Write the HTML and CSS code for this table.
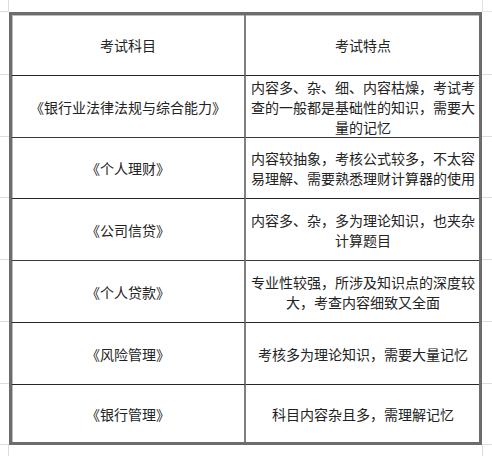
FILE: index.html
```html
<!DOCTYPE html>
<html lang="zh-CN">
<head>
<meta charset="utf-8">
<title>考试科目</title>
<link rel="stylesheet" href="styles.css">
</head>
<body>
<div class="sheet">
  <div class="corner tl"></div>
  <div class="gut-top"></div>
  <div class="corner tr"></div>

  <div class="gut side">
    <div class="seg s1"></div><div class="seg s2"></div><div class="seg s3"></div><div class="seg s4"></div><div class="seg s5"></div><div class="seg s6"></div><div class="seg s7"></div>
  </div>

  <div class="tbl">
    <div class="cell left r0">考试科目</div>
    <div class="cell right r0">考试特点</div>

    <div class="cell left r1 line">《银行业法律法规与综合能力》</div>
    <div class="cell right r1 line">内容多、杂、细、内容枯燥，考试考<br>查的一般都是基础性的知识，需要大<br>量的记忆</div>

    <div class="cell left r2 line">《个人理财》</div>
    <div class="cell right r2 line">内容较抽象，考核公式较多，不太容<br>易理解、需要熟悉理财计算器的使用</div>

    <div class="cell left r3 line">《公司信贷》</div>
    <div class="cell right r3 line">内容多、杂，多为理论知识，也夹杂<br>计算题目</div>

    <div class="cell left r4 line">《个人贷款》</div>
    <div class="cell right r4 line">专业性较强，所涉及知识点的深度较<br>大，考查内容细致又全面</div>

    <div class="cell left r5 line">《风险管理》</div>
    <div class="cell right r5 line">考核多为理论知识，需要大量记忆</div>

    <div class="cell left r6 line">《银行管理》</div>
    <div class="cell right r6 line">科目内容杂且多，需理解记忆</div>
  </div>

  <div class="gut side right-gut">
    <div class="seg s1"></div><div class="seg s2"></div><div class="seg s3"></div><div class="seg s4"></div><div class="seg s5"></div><div class="seg s6"></div><div class="seg s7"></div>
  </div>

  <div class="corner bl"></div>
  <div class="gut-bottom"></div>
  <div class="corner br"></div>
</div>
</body>
</html>
```

FILE: styles.css
```css
* { box-sizing: border-box; }
html, body { margin: 0; padding: 0; background: #fff; }
body {
  width: 492px;
  height: 456px;
  overflow: hidden;
  font-family: "Noto Sans CJK SC", "Noto Sans", sans-serif;
  font-size: 14px;
  color: #222;
}
.sheet {
  display: grid;
  grid-template-columns: 9px 473px 10px;
  grid-template-rows: 12px 433px 11px;
}
.corner.tl { border-right: 1px solid #dcdcdc; border-bottom: 1px solid #dcdcdc; }
.corner.tr { border-left: 1px solid #e2e2e2; border-bottom: 1px solid #e6e6e6; }
.corner.bl { border-right: 1px solid #dcdcdc; }
.corner.br { border-left: 1px solid #dcdcdc; }
.gut-top, .gut-bottom { background: #fff; }

.gut { display: flex; flex-direction: column; }
.seg { border-bottom: 1px solid #dedede; }
.s1 { height: 63px; }
.s2 { height: 62px; }
.s3 { height: 61px; }
.s4 { height: 62px; }
.s5 { height: 62px; }
.s6 { height: 62px; }
.s7 { height: 61px; }

.tbl {
  display: grid;
  grid-template-columns: 234px 233px;
  grid-template-rows: 60px 62px 61px 62px 62px 62px 58px;
  border: 3px solid #6c6c6c;
  box-shadow: inset 1px 1px 0 #bdbdbd;
  background: #fff;
}
.cell {
  display: flex;
  align-items: center;
  justify-content: center;
  text-align: center;
  line-height: 20px;
}
.cell.left {
  border-right: 2px solid #808080;
  padding: 0 2px;
}
.cell.right {
  padding: 0 2px 0 3px;
}
.cell.line { border-top: 1px solid #262626; }
.cell.r2, .cell.r4 { border-top-color: #3a3a3a; }
```
